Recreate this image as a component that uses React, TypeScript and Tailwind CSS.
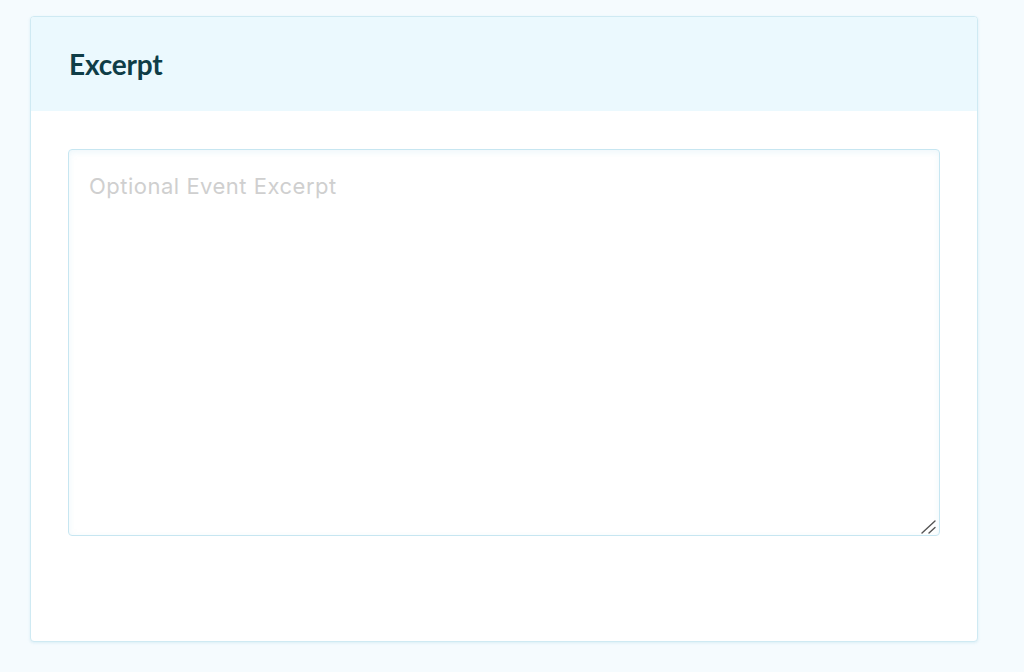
export default function App() {
  return (
    <div className="min-h-[672px] w-[1024px] bg-[#f5fbfe] pl-[30px] pt-[16px]">
      <div className="w-[948px] overflow-hidden rounded-[4px] border border-[#cfeaf3] bg-white shadow-[0_1px_3px_rgba(180,220,235,0.4)]">
        <div className="flex h-[94px] items-center bg-[#ebf9fe] px-[38px]">
          <h2 className="font-['Lato',sans-serif] text-[28px] font-bold tracking-[-0.2px] text-[#0f3d47]">Excerpt</h2>
        </div>
        <div className="px-[37px] pb-[105px] pt-[38px]">
          <div className="relative">
            <textarea
              placeholder="Optional Event Excerpt"
              className="block h-[387px] w-[872px] resize-none rounded-[4px] border border-[#c7e6f1] bg-white px-[20px] py-[22px] font-['Inter',sans-serif] text-[22px] leading-[28px] tracking-[0.5px] text-[#333] shadow-[inset_0_2px_6px_rgba(200,230,240,0.35)] outline-none placeholder:text-[#cfcfcf]"
            />
            <svg className="pointer-events-none absolute bottom-[2px] right-[3px]" width="16" height="14" viewBox="0 0 16 14">
              <line x1="1" y1="13" x2="14" y2="1" stroke="#555" strokeWidth="1.4" strokeLinecap="round" />
              <line x1="8" y1="13" x2="14" y2="7.5" stroke="#555" strokeWidth="1.4" strokeLinecap="round" />
            </svg>
          </div>
        </div>
      </div>
    </div>
  );
}
